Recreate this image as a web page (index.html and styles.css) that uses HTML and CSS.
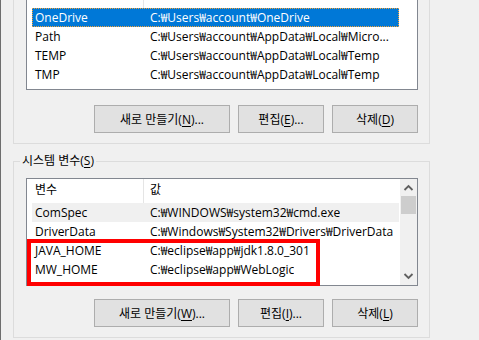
FILE: index.html
```html
<!DOCTYPE html>
<html lang="ko">
<head>
  <meta charset="UTF-8">
  <meta name="viewport" content="width=device-width, initial-scale=1.0">
  <title>환경 변수</title>
  <link rel="stylesheet" href="styles.css">
</head>
<body>
  <div class="window">
    <!-- 사용자 변수: top part is scrolled out of view -->
    <div class="group group-user">
      <div class="list list-user">
        <div class="list-body">
          <div class="row head"><span class="name">변수</span><span class="value">값</span></div>
          <div class="row selected"><span class="name">OneDrive</span><span class="value">C:₩Users₩account₩OneDrive</span></div>
          <div class="row"><span class="name">Path</span><span class="value">C:₩Users₩account₩AppData₩Local₩Micro...</span></div>
          <div class="row"><span class="name">TEMP</span><span class="value">C:₩Users₩account₩AppData₩Local₩Temp</span></div>
          <div class="row"><span class="name">TMP</span><span class="value">C:₩Users₩account₩AppData₩Local₩Temp</span></div>
        </div>
        <div class="scrollbar empty"></div>
      </div>
      <div class="buttons">
        <button class="btn wide">새로 만들기(<u>N</u>)...</button>
        <button class="btn">편집(<u>E</u>)...</button>
        <button class="btn">삭제(<u>D</u>)</button>
      </div>
    </div>

    <fieldset class="group group-system">
      <legend>시스템 변수(<u>S</u>)</legend>
      <div class="list list-system">
        <div class="list-body">
          <div class="row head"><span class="name">변수</span><span class="value">값</span></div>
          <div class="row hover"><span class="name">ComSpec</span><span class="value">C:₩WINDOWS₩system32₩cmd.exe</span></div>
          <div class="row"><span class="name">DriverData</span><span class="value">C:₩Windows₩System32₩Drivers₩DriverData</span></div>
          <div class="row"><span class="name">JAVA_HOME</span><span class="value">C:₩eclipse₩app₩jdk1.8.0_301</span></div>
          <div class="row"><span class="name">MW_HOME</span><span class="value">C:₩eclipse₩app₩WebLogic</span></div>
        </div>
        <div class="scrollbar">
          <div class="arrow">
            <svg width="17" height="17" viewBox="0 0 17 17"><path d="M4.5 11 L8.5 7 L12.5 11" fill="none" stroke="#606060" stroke-width="1.8"/></svg>
          </div>
          <div class="thumb"></div>
          <div class="track"></div>
          <div class="arrow">
            <svg width="17" height="17" viewBox="0 0 17 17"><path d="M4.5 6 L8.5 10 L12.5 6" fill="none" stroke="#606060" stroke-width="1.8"/></svg>
          </div>
        </div>
        <div class="highlight"></div>
      </div>
      <div class="buttons">
        <button class="btn wide">새로 만들기(<u>W</u>)...</button>
        <button class="btn">편집(<u>I</u>)...</button>
        <button class="btn">삭제(<u>L</u>)</button>
      </div>
    </fieldset>
  </div>
</body>
</html>
```

FILE: styles.css
```css
body {
  margin: 0;
  background: #f0f0f0;
  font-family: "Open Sans", "Noto Sans CJK KR", sans-serif;
  font-size: 12px;
  color: #000;
}
.window {
  height: 340px;
  overflow: hidden;
  border-left: 1px solid #6e6e6e;
}
.group {
  box-sizing: border-box;
  width: 417px;
  margin: 0 0 0 12px;
  border: 1px solid #dcdcdc;
}
.group-user {
  margin-top: -30px;
  padding: 12px 11px 10px 12px;
}
.group-system {
  margin-top: 9px;
  padding: 9px 11px 10px 6px;
  min-width: 0;
}
legend {
  padding: 0 2px;
  line-height: 16px;
}
.group-system .list {
  margin-left: 6px;
}
.list {
  position: relative;
  box-sizing: border-box;
  width: 392px;
  display: flex;
  background: #fff;
  border: 1px solid #828790;
}
.list-body {
  flex: 1;
  padding: 0 1px 5px 5px;
}
.list-system .list-body {
  padding-bottom: 6px;
}
.row {
  display: flex;
  height: 19px;
  line-height: 19px;
  white-space: nowrap;
  box-sizing: border-box;
}
.row .name {
  box-sizing: border-box;
  width: 112px;
  padding-left: 3px;
  border-right: 1px solid transparent;
}
.row .value {
  padding-left: 6px;
  overflow: hidden;
}
.row.head {
  height: 24px;
  line-height: 22px;
  margin-left: -5px;
  padding-left: 5px;
}
.row.head .name {
  border-right-color: #e5e5e5;
}
.row.selected {
  background: #0078d7;
  color: #fff;
  outline: 1px dotted #f2a33a;
  outline-offset: -1px;
}
.row.hover {
  background: #f0f0f0;
}
.scrollbar {
  width: 17px;
  display: flex;
  flex-direction: column;
  background: #f0f0f0;
}
.scrollbar.empty {
  background: #fff;
}
.arrow {
  height: 17px;
}
.arrow svg {
  display: block;
}
.thumb {
  height: 18px;
  margin: 0 1px;
  background: #cdcdcd;
}
.track {
  flex: 1;
}
.highlight {
  position: absolute;
  left: 0;
  top: 60px;
  width: 293px;
  height: 47px;
  box-sizing: border-box;
  border: 4px solid #ff0000;
}
.buttons {
  display: flex;
  justify-content: flex-end;
  gap: 8px;
  width: 392px;
  margin-top: 15px;
}
.group-system .buttons {
  margin-left: 6px;
  margin-top: 13px;
}
.btn {
  box-sizing: border-box;
  width: 86px;
  height: 28px;
  padding: 0;
  background: #e1e1e1;
  border: 1px solid #adadad;
  font: inherit;
  color: #000;
}
.btn.wide {
  width: 136px;
}
u {
  text-underline-offset: 2px;
}
```
